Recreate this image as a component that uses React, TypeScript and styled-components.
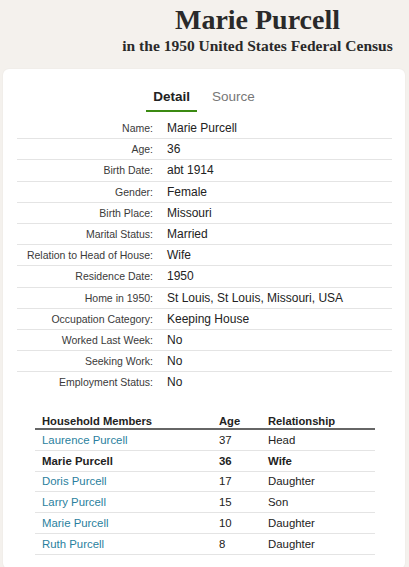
import React from 'react';
import styled, { createGlobalStyle } from 'styled-components';

const GlobalStyle = createGlobalStyle`
  html, body {
    margin: 0;
    padding: 0;
    background: #f4f1ed;
  }
  body {
    font-family: "Liberation Sans", Arial, sans-serif;
    color: #222;
  }
`;

const Page = styled.div`
  width: 409px;
  min-height: 567px;
  overflow: hidden;
`;

const Header = styled.header`
  padding: 4px 0 0 106px;
  text-align: center;
  height: 65px;
`;

const Title = styled.h1`
  margin: 0;
  font-family: "Liberation Serif", "Times New Roman", serif;
  font-weight: 700;
  font-size: 28px;
  line-height: 32px;
  color: #2a2a2a;
`;

const Subtitle = styled.h2`
  margin: 0;
  font-family: "Liberation Serif", "Times New Roman", serif;
  font-weight: 700;
  font-size: 15.5px;
  line-height: 20px;
  color: #2a2a2a;
`;

const Card = styled.main`
  margin: 0 4px 0 3px;
  background: #fff;
  border-radius: 6px;
  box-shadow: 0 0 2px rgba(0, 0, 0, 0.06);
  padding: 16px 0 14px;
`;

const Tabs = styled.nav`
  display: flex;
  justify-content: center;
  gap: 8px;
`;

const Tab = styled.div<{ active?: boolean }>`
  padding: 4px 7px 6px;
  font-size: 13.5px;
  line-height: 15px;
  font-weight: ${({ active }) => (active ? 700 : 400)};
  color: ${({ active }) => (active ? '#222' : '#777')};
  border-bottom: 2px solid ${({ active }) => (active ? '#3b8a12' : 'transparent')};
`;

const Details = styled.dl`
  margin: 6px 13px 0 14px;
`;

const DetailRow = styled.div`
  display: grid;
  grid-template-columns: 136px 1fr;
  column-gap: 14px;
  align-items: center;
  height: 20.2px;
  border-bottom: 1px solid #e4e4e4;
  &:last-child {
    border-bottom: none;
  }
`;

const Label = styled.dt`
  text-align: right;
  font-size: 10.5px;
  color: #3a3a3a;
`;

const Value = styled.dd`
  margin: 0;
  font-size: 12px;
  color: #222;
`;

const Household = styled.table`
  margin: 20px 30px 0 32px;
  width: 340px;
  border-collapse: collapse;
  table-layout: fixed;
  font-size: 11.4px;
`;

const HeadCell = styled.th<{ w?: number }>`
  box-sizing: border-box;
  text-align: left;
  font-weight: 700;
  font-size: 11.2px;
  padding: 3px 0 1px 7px;
  color: #222;
  border-bottom: 2px solid #666;
  ${({ w }) => (w ? `width: ${w}px;` : '')}
`;

const Cell = styled.td<{ self?: boolean; link?: boolean }>`
  box-sizing: border-box;
  padding: 0 0 0 7px;
  height: 20.8px;
  border-bottom: 1px solid #e4e4e4;
  font-weight: ${({ self }) => (self ? 700 : 400)};
  color: ${({ link }) => (link ? '#2a7f9e' : '#222')};
`;

const details: [string, string][] = [
  ['Name:', 'Marie Purcell'],
  ['Age:', '36'],
  ['Birth Date:', 'abt 1914'],
  ['Gender:', 'Female'],
  ['Birth Place:', 'Missouri'],
  ['Marital Status:', 'Married'],
  ['Relation to Head of House:', 'Wife'],
  ['Residence Date:', '1950'],
  ['Home in 1950:', 'St Louis, St Louis, Missouri, USA'],
  ['Occupation Category:', 'Keeping House'],
  ['Worked Last Week:', 'No'],
  ['Seeking Work:', 'No'],
  ['Employment Status:', 'No'],
];

const members = [
  { name: 'Laurence Purcell', age: '37', rel: 'Head' },
  { name: 'Marie Purcell', age: '36', rel: 'Wife', self: true },
  { name: 'Doris Purcell', age: '17', rel: 'Daughter' },
  { name: 'Larry Purcell', age: '15', rel: 'Son' },
  { name: 'Marie Purcell', age: '10', rel: 'Daughter' },
  { name: 'Ruth Purcell', age: '8', rel: 'Daughter' },
];

export default function App() {
  return (
    <Page>
      <GlobalStyle />
      <Header>
        <Title>Marie Purcell</Title>
        <Subtitle>in the 1950 United States Federal Census</Subtitle>
      </Header>
      <Card>
        <Tabs>
          <Tab active>Detail</Tab>
          <Tab>Source</Tab>
        </Tabs>
        <Details>
          {details.map(([label, value]) => (
            <DetailRow key={label}>
              <Label>{label}</Label>
              <Value>{value}</Value>
            </DetailRow>
          ))}
        </Details>
        <Household>
          <thead>
            <tr>
              <HeadCell w={177}>Household Members</HeadCell>
              <HeadCell w={49}>Age</HeadCell>
              <HeadCell>Relationship</HeadCell>
            </tr>
          </thead>
          <tbody>
            {members.map((m, i) => (
              <tr key={i}>
                <Cell self={m.self} link={!m.self}>{m.name}</Cell>
                <Cell self={m.self}>{m.age}</Cell>
                <Cell self={m.self}>{m.rel}</Cell>
              </tr>
            ))}
          </tbody>
        </Household>
      </Card>
    </Page>
  );
}
